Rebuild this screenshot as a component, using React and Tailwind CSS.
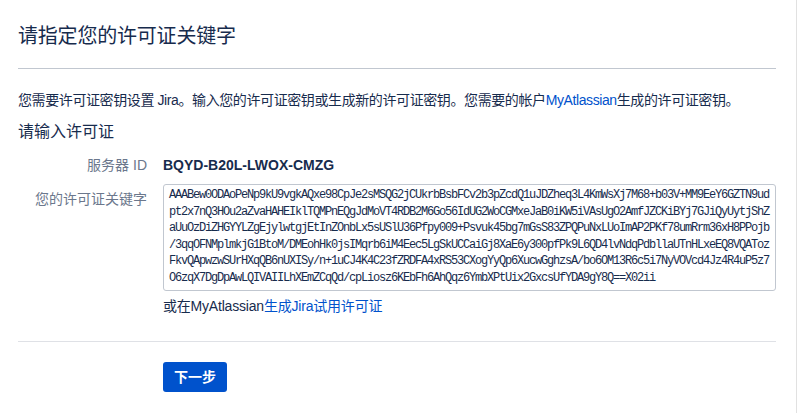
const licenseKeyLines = [
  "AAABew0ODAoPeNp9kU9vgkAQxe98CpJe2sMSQG2jCUkrbBsbFCv2b3pZcdQ1uJDZheq3L4KmWsXj7M68+b03V+MM9EeY6GZTN9ud",
  "pt2x7nQ3HOu2aZvaHAHEIklTQMPnEQgJdMoVT4RDB2M6Go56IdUG2WoCGMxeJaB0iKW5iVAsUgO2AmfJZCKiBYj7GJiQyUytjShZ",
  "aUuOzDiZHGYYLZgEjylwtgjEtInZOnbLx5sUSlU36Pfpy009+Psvuk45bg7mGsS83ZPQPuNxLUoImAP2PKf78umRrm36xH8PPojb",
  "/3qqOFNMplmkjG1BtoM/DMEohHk0jsIMqrb6iM4Eec5LgSkUCCaiGj8XaE6y300pfPk9L6QD4lvNdqPdbllaUTnHLxeEQ8VQAToz",
  "FkvQApwzwSUrHXqQB6nUXISy/n+1uCJ4K4C23fZRDFA4xRS53CXogYyQp6XucwGghzsA/bo6OM13R6c5i7NyVOVcd4Jz4R4uP5z7",
  "O6zqX7DgDpAwLQIVAIILhXEmZCqQd/cpLiosz6KEbFh6AhQqz6YmbXPtUix2GxcsUfYDA9gY8Q==X02ii",
];

export default function App() {
  return (
    <div className="w-[797px] h-[413px] bg-white border-r border-[#e1e1e1] font-['Liberation_Sans','Noto_Sans_CJK_SC',sans-serif] text-[#172b4d] overflow-hidden">
      <div className="w-[776px] pl-[18px] pt-6">
        <h1 className="text-[20px] leading-6 font-normal tracking-[-0.2px]">请指定您的许可证关键字</h1>
        <div className="mt-5 h-px bg-[#c1c7d0]" />

        <p className="mt-[21px] text-[14px] leading-5 tracking-[-0.4px]">
          您需要许可证密钥设置 Jira。输入您的许可证密钥或生成新的许可证密钥。您需要的帐户
          <a className="text-[#0052cc]">MyAtlassian</a>
          生成的许可证密钥。
        </p>

        <h2 className="mt-3 text-[16px] leading-5 font-normal">请输入许可证</h2>

        <div className="mt-[13px] flex items-center gap-4">
          <div className="w-[129px] text-right text-[14px] leading-5 text-[#6b778c]">服务器 ID</div>
          <div className="text-[14px] leading-5 font-bold">BQYD-B20L-LWOX-CMZG</div>
        </div>

        <div className="mt-[9px] flex items-start gap-4">
          <div className="w-[129px] pt-[5px] text-right text-[14px] leading-5 text-[#6b778c]">您的许可证关键字</div>
          <div className="flex flex-col">
            <textarea
              readOnly
              wrap="off"
              value={licenseKeyLines.join("\n")}
              className="w-[613px] h-[107px] resize-none overflow-hidden border border-[#c1c7d0] rounded-[3px] px-[5px] pt-[2px] pb-1 font-['Liberation_Mono',monospace] text-[12px] tracking-[-1.2px] leading-[16.6px] text-[#172b4d] outline-none"
            />
            <div className="mt-[5px] text-[14px] leading-5 tracking-[-0.2px]">
              或在MyAtlassian<a className="text-[#0052cc]">生成Jira试用许可证</a>
            </div>
          </div>
        </div>

        <div className="mt-[25px] h-px bg-[#dfe1e6]" />

        <div className="mt-5 pl-[145px]">
          <button className="w-16 h-[30px] rounded-[3px] bg-[#0052cc] text-white text-[14px] font-bold">
            下一步
          </button>
        </div>
      </div>
    </div>
  );
}
